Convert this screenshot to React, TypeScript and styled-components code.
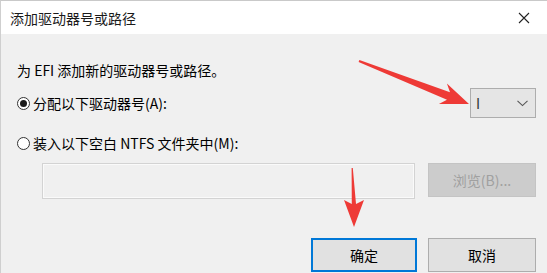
import React from 'react';
import styled, { createGlobalStyle, css } from 'styled-components';

const GlobalStyle = createGlobalStyle`
    html, body {
        margin: 0;
        padding: 0;
        background: #f0f0f0;
    }
    body {
        font-family: "Noto Sans CJK SC", "Noto Sans", sans-serif;
        font-size: 14px;
        color: #000;
    }
`;

const Window = styled.div`
    position: relative;
    width: 547px;
    height: 273px;
    box-sizing: border-box;
    border-top: 1px solid #c9c9c9;
    border-left: 1px solid #cfcfcf;
    display: flex;
    flex-direction: column;
    overflow: hidden;
`;

const TitleBar = styled.div`
    height: 33px;
    flex: none;
    background: #ffffff;
    display: flex;
    align-items: center;
    justify-content: space-between;
    padding: 0 17px 0 9px;
`;

const Title = styled.span`
    font-size: 14px;
    line-height: 20px;
    color: #1a1a1a;
`;

const Body = styled.div`
    flex: 1;
    background: #f0f0f0;
    padding: 26px 11px 0 16px;
    display: flex;
    flex-direction: column;
`;

const Intro = styled.div`
    line-height: 20px;
`;

const OptionRow = styled.div<{ $top: number; $height: number }>`
    margin-top: ${p => p.$top}px;
    height: ${p => p.$height}px;
    display: flex;
    align-items: center;
    justify-content: space-between;
`;

const RadioLabel = styled.label`
    display: flex;
    align-items: center;
    gap: 3px;
    line-height: 20px;
`;

const RadioCircle = styled.span<{ $checked?: boolean }>`
    position: relative;
    width: 13px;
    height: 13px;
    box-sizing: border-box;
    border: 1px solid #333;
    border-radius: 50%;
    background: #fff;
    ${p => p.$checked && css`
        &::after {
            content: '';
            position: absolute;
            left: 2px;
            top: 2px;
            width: 7px;
            height: 7px;
            border-radius: 50%;
            background: #1a1a1a;
        }
    `}
`;

const Select = styled.div`
    width: 66px;
    height: 30px;
    box-sizing: border-box;
    border: 1px solid #adadad;
    background: #e5e5e5;
    display: flex;
    align-items: center;
    justify-content: space-between;
    padding: 0 7px 0 5px;
    color: #333;
`;

const PathRow = styled.div`
    margin-top: 10px;
    margin-left: 25px;
    display: flex;
    gap: 13px;
    height: 36px;
`;

const PathInput = styled.div`
    width: 373px;
    height: 36px;
    box-sizing: border-box;
    border: 1px solid #d3d3d3;
    box-shadow: inset 0 0 0 1px #fafafa;
    background: #f0f0f0;
`;

const Button = styled.button<{ $primary?: boolean }>`
    width: 108px;
    height: 34px;
    box-sizing: border-box;
    font-family: inherit;
    font-size: 14px;
    color: #000;
    background: #e1e1e1;
    border: 1px solid #adadad;
    padding: 0;
    &:disabled {
        background: #cccccc;
        border-color: #c4c4c4;
        color: #a0a0a0;
    }
    ${p => p.$primary && css`
        width: 106px;
        border: 2px solid #0078d7;
    `}
`;

const ButtonRow = styled.div`
    margin-top: 39px;
    display: flex;
    justify-content: flex-end;
    gap: 11px;
`;

const Annotations = styled.svg`
    position: absolute;
    left: 0;
    top: 0;
    pointer-events: none;
`;

const CloseIcon = () => (
    <svg width="12" height="12" viewBox="0 0 12 12">
        <path d="M1 1 L11 11 M11 1 L1 11" stroke="#222" strokeWidth="1.1" fill="none" />
    </svg>
);

const Chevron = () => (
    <svg width="11" height="7" viewBox="0 0 11 7">
        <path d="M0.5 0.8 L5.5 5.6 L10.5 0.8" stroke="#555" strokeWidth="1.1" fill="none" />
    </svg>
);

const App = () => {
    return (
        <>
            <GlobalStyle />
            <Window>
                <TitleBar>
                    <Title>添加驱动器号或路径</Title>
                    <CloseIcon />
                </TitleBar>
                <Body>
                    <Intro>为 EFI 添加新的驱动器号或路径。</Intro>
                    <OptionRow $top={8} $height={30}>
                        <RadioLabel>
                            <RadioCircle $checked />
                            分配以下驱动器号(A):
                        </RadioLabel>
                        <Select>
                            <span>I</span>
                            <Chevron />
                        </Select>
                    </OptionRow>
                    <OptionRow $top={15} $height={20}>
                        <RadioLabel>
                            <RadioCircle />
                            装入以下空白 NTFS 文件夹中(M):
                        </RadioLabel>
                    </OptionRow>
                    <PathRow>
                        <PathInput />
                        <Button disabled>浏览(B)...</Button>
                    </PathRow>
                    <ButtonRow>
                        <Button $primary>确定</Button>
                        <Button>取消</Button>
                    </ButtonRow>
                </Body>
                <Annotations width="547" height="273" viewBox="0 0 547 273">
                    <polygon
                        fill="#ee3a36"
                        points="358.4,59.1 449,91.3 445.9,82.5 468,103 437.9,103.1 446,98.7 357.6,60.9"
                    />
                    <polygon
                        fill="#ee3a36"
                        points="350.6,167 351.8,167 355,203 363,199 353,226 343,199 350.8,203"
                    />
                </Annotations>
            </Window>
        </>
    );
};

export default App;
